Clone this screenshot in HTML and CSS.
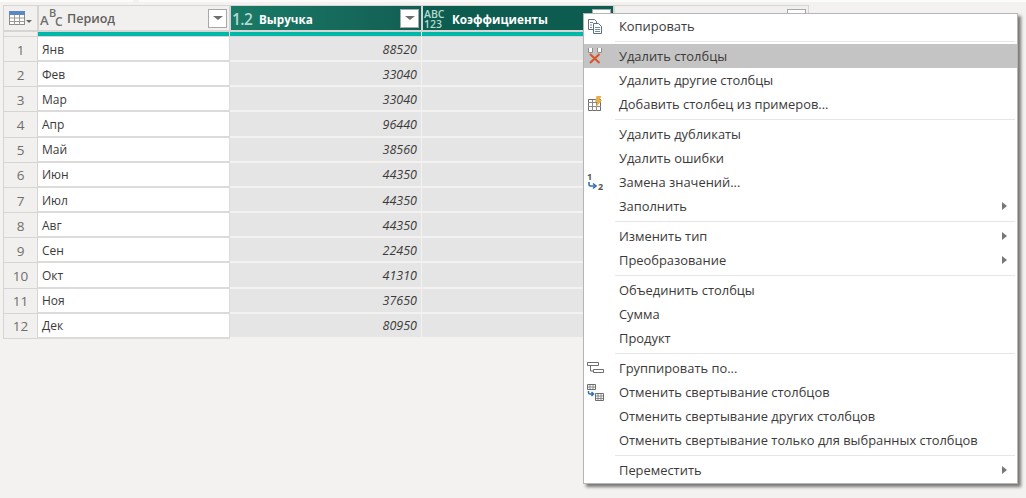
FILE: index.html
```html
<!DOCTYPE html>
<html lang="en">
<head>
  <meta charset="UTF-8">
  <title>Период — Power Query</title>
  <link rel="stylesheet" href="styles.css">
</head>
<body>

  <div class="top-strip">
    <span class="strip-a"></span>
    <span class="strip-b"></span>
  </div>

  <div class="grid">
    <!-- header row -->
    <div class="head corner">
      <svg width="23" height="15" viewBox="0 0 23 15">
        <rect x="0.5" y="0.5" width="15" height="13" fill="#fff" stroke="#8a8a8a"/>
        <rect x="0.5" y="0.5" width="15" height="3" fill="#5b87c5" stroke="#5b87c5"/>
        <path d="M5.500 4v10M10.500 4v10M1 7h14M1 10.500h14" stroke="#9a9a9a"/>
        <path d="M17 9h6l-3 3z" fill="#666"/>
      </svg>
    </div>
    <div class="head plain">
      <span class="type-abc"><i>A</i><i class="up">B</i><i class="down">C</i></span>
      <span class="title">Период</span>
      <span class="filter"></span>
    </div>
    <div class="head green">
      <span class="type-num">1.2</span>
      <span class="title">Выручка</span>
      <span class="filter"></span>
    </div>
    <div class="head dark">
      <span class="type-any">ABC<br>123</span>
      <span class="title title-wide">Коэффициенты</span>
      <span class="filter"></span>
    </div>
    <div class="head plain">
      <span class="filter"></span>
    </div>

    <!-- quality line -->
    <div class="line blank"></div>
    <div class="line"></div>
    <div class="line"></div>
    <div class="line"></div>
    <div class="line"></div>

    <!-- rows -->
    <div class="num">1</div><div class="cell">Янв</div><div class="cell val">88520</div><div class="cell sel"></div><div class="cell"></div>
    <div class="num">2</div><div class="cell">Фев</div><div class="cell val">33040</div><div class="cell sel"></div><div class="cell"></div>
    <div class="num">3</div><div class="cell">Мар</div><div class="cell val">33040</div><div class="cell sel"></div><div class="cell"></div>
    <div class="num">4</div><div class="cell">Апр</div><div class="cell val">96440</div><div class="cell sel"></div><div class="cell"></div>
    <div class="num">5</div><div class="cell">Май</div><div class="cell val">38560</div><div class="cell sel"></div><div class="cell"></div>
    <div class="num">6</div><div class="cell">Июн</div><div class="cell val">44350</div><div class="cell sel"></div><div class="cell"></div>
    <div class="num">7</div><div class="cell">Июл</div><div class="cell val">44350</div><div class="cell sel"></div><div class="cell"></div>
    <div class="num">8</div><div class="cell">Авг</div><div class="cell val">44350</div><div class="cell sel"></div><div class="cell"></div>
    <div class="num">9</div><div class="cell">Сен</div><div class="cell val">22450</div><div class="cell sel"></div><div class="cell"></div>
    <div class="num">10</div><div class="cell">Окт</div><div class="cell val">41310</div><div class="cell sel"></div><div class="cell"></div>
    <div class="num">11</div><div class="cell">Ноя</div><div class="cell val">37650</div><div class="cell sel"></div><div class="cell"></div>
    <div class="num">12</div><div class="cell">Дек</div><div class="cell val">80950</div><div class="cell sel"></div><div class="cell"></div>
  </div>

  <div class="menu">
    <div class="item">
      <svg class="icon" width="16" height="16" viewBox="0 0 16 16">
        <path d="M1.500 1.500h6l2 2v8h-8z" fill="#fff" stroke="#6d6d6d"/>
        <path d="M6.500 5.500h5l3 3v7h-8z" fill="#fff" stroke="#5a6f8c"/>
        <path d="M3 4.500h3M3 7h2M3 9.500h2M8 9.500h5M8 11.500h5M8 13.500h5" stroke="#6d8ab0"/>
      </svg>
      Копировать
    </div>
    <div class="sep"></div>
    <div class="item active">
      <svg class="icon" width="16" height="16" viewBox="0 0 16 16">
        <path d="M1.500 0v4.500h4V0M10.500 0v4.500h4V0" fill="#fff" stroke="#8f8f8f"/>
        <path d="M3 6l9.500 9M12.500 6L3 15" stroke="#d9532c" stroke-width="2"/>
      </svg>
      Удалить столбцы
    </div>
    <div class="item">Удалить другие столбцы</div>
    <div class="item">
      <svg class="icon" width="16" height="16" viewBox="0 0 16 16">
        <path d="M1.500 3.500h12v11h-12z" fill="#fff" stroke="#6d6d6d"/>
        <path d="M1 6.500h13M1 10.500h13M5.500 4v11M9.500 4v11" stroke="#8a8a8a"/>
        <path d="M9.500 0h5l-2 4h2.500l-6.500 8 2-6h-2.500z" fill="#e9b04a"/>
      </svg>
      Добавить столбец из примеров...
    </div>
    <div class="sep"></div>
    <div class="item">Удалить дубликаты</div>
    <div class="item">Удалить ошибки</div>
    <div class="item">
      <svg class="icon icon-wide" width="20" height="23" viewBox="0 0 20 23">
        <text x="1" y="9" class="icon-num">1</text>
        <path d="M3 11v2.500q0 1.500 1.500 1.500h5" fill="none" stroke="#2f6fb5" stroke-width="1.600"/>
        <path d="M7 12.500l3 2.500-3 2.500" fill="none" stroke="#2f6fb5" stroke-width="1.600"/>
        <text x="12" y="19" class="icon-num">2</text>
      </svg>
      Замена значений...
    </div>
    <div class="item">Заполнить<span class="arrow"></span></div>
    <div class="sep"></div>
    <div class="item">Изменить тип<span class="arrow"></span></div>
    <div class="item">Преобразование<span class="arrow"></span></div>
    <div class="sep"></div>
    <div class="item">Объединить столбцы</div>
    <div class="item">Сумма</div>
    <div class="item">Продукт</div>
    <div class="sep"></div>
    <div class="item">
      <svg class="icon" width="17" height="16" viewBox="0 0 17 16">
        <path d="M0.500 2.500h11v3h-11zM6.500 9.500h10v3h-10z" fill="#fff" stroke="#6d6d6d"/>
        <path d="M3.500 6v5h3" fill="none" stroke="#6d6d6d"/>
      </svg>
      Группировать по...
    </div>
    <div class="item">
      <svg class="icon" width="17" height="17" viewBox="0 0 17 17">
        <path d="M0.500 0.500h8v5h-8zM8.500 9.500h8v7h-8z" fill="#fff" stroke="#6d6d6d"/>
        <path d="M3 1v4M6 1v4M1 3h7M11 10v6M14 10v6M9 12h7M9 14.500h7" stroke="#8a8a8a"/>
        <path d="M1.500 7v1.500q0 1.500 1.500 1.500h3M4.500 8l2 2-2 2" fill="none" stroke="#2f6fb5" stroke-width="1.500"/>
      </svg>
      Отменить свертывание столбцов
    </div>
    <div class="item">Отменить свертывание других столбцов</div>
    <div class="item">Отменить свертывание только для выбранных столбцов</div>
    <div class="sep"></div>
    <div class="item">Переместить<span class="arrow"></span></div>
  </div>

</body>
</html>
```

FILE: styles.css
```css
* {
  box-sizing: border-box;
}

body {
  margin: 0;
  height: 498px;
  overflow: hidden;
  background: #f3f2f0;
  font-family: "Open Sans", sans-serif;
  font-size: 12px;
  color: #3b3a39;
}

.top-strip {
  display: flex;
  gap: 6px;
  height: 2px;
}

.strip-a {
  width: 133px;
  background: #fbfbfa;
}

.strip-b {
  flex: 1;
  background: #fbfbfa;
}

.grid {
  display: grid;
  grid-template-columns: 35px 192px 192px 192px 195px;
  grid-template-rows: 27px 5px repeat(12, 25.17px);
  margin: 3px 0 0 3px;
  width: 806px;
}

.head {
  display: flex;
  align-items: center;
  padding: 1px 2px 0 1px;
  border: 1px solid #d6d5d3;
  border-bottom-width: 2px;
  background: #f1f0ee;
  font-weight: 600;
  font-size: 12.500px;
  color: #605e5c;
}

.corner {
  padding-left: 5px;
}

.green {
  background: linear-gradient(90deg, #1a7a66, #125e53);
  color: #fff;
  font-weight: 700;
  font-size: 11.700px;
}

.dark {
  background: #0d5c50;
  color: #fff;
  font-weight: 700;
  font-size: 11.700px;
}

.title {
  flex: 1;
  padding-left: 3px;
}

.title-wide {
  padding-left: 5px;
}

.type-abc {
  position: relative;
  width: 24px;
  height: 22px;
  font-size: 13px;
  font-weight: 600;
  color: #6e6e6e;
}

.type-abc i {
  position: absolute;
  left: 0;
  top: 3px;
  font-style: normal;
}

.type-abc .up {
  left: 9px;
  top: -3px;
  font-size: 11px;
}

.type-abc .down {
  left: 15px;
  top: 5px;
  font-size: 12px;
}

.type-num {
  width: 24px;
  font-size: 15.500px;
  font-weight: 600;
  color: #b5d9d0;
  letter-spacing: -0.5px;
}

.type-any {
  width: 23px;
  font-size: 10.500px;
  line-height: 10px;
  font-weight: 600;
  color: #b5d9d0;
}

.filter {
  position: relative;
  width: 19px;
  height: 19px;
  margin-left: auto;
  background: #fff;
  border: 1px solid #a8a8a8;
}

.filter::after {
  content: "";
  position: absolute;
  left: 4px;
  top: 6px;
  border: 5px solid transparent;
  border-top: 4px solid #6e6e6e;
  border-bottom: 0;
}

.line {
  background: #00b8a9;
  border-right: 1px solid #e6e6e4;
  border-bottom: 1px solid #d6d5d3;
}

.line.blank {
  background: #f1f0ee;
  border: 1px solid #d6d5d3;
  border-top: 0;
}

.num {
  display: flex;
  align-items: center;
  justify-content: center;
  padding-top: 1px;
  background: #f1f0ee;
  border: 1px solid #d6d5d3;
  border-top: 0;
  font-size: 13.500px;
  color: #706e6c;
}

.cell {
  display: flex;
  align-items: center;
  padding: 1px 4px 0;
  background: #fff;
  border-right: 1px solid #dcdbd9;
  border-bottom: 2px solid #dcdbd9;
}

.val {
  justify-content: flex-end;
  background: #e5e5e5;
  border-color: #f3f2f0;
  font-style: italic;
  font-size: 12.500px;
}

.sel {
  background: #e5e5e5;
  border-color: #f3f2f0;
}

/* context menu lies over the grid */
.menu {
  position: absolute;
  left: 583px;
  top: 13px;
  width: 435px;
  height: 471px;
  background: #fff;
  border: 1px solid #b5b5b5;
  box-shadow: 3px 3px 3px rgba(0, 0, 0, 0.5);
  font-size: 12.900px;
}

.item {
  display: flex;
  align-items: center;
  position: relative;
  height: 24px;
  padding-left: 35px;
  color: #3b3a39;
}

.item.active {
  background: #c4c4c4;
}

.sep {
  height: 1px;
  margin: 3px 2px 2px 31px;
  background: #e6e6e6;
}

.icon {
  position: absolute;
  left: 3px;
  top: 4px;
}

.icon-wide {
  left: 2px;
  top: 1px;
}

.icon-num {
  font-family: "Open Sans", sans-serif;
  font-size: 9px;
  font-weight: 700;
  fill: #555;
}

.arrow {
  position: absolute;
  right: 10px;
  top: 8px;
  border: 4px solid transparent;
  border-left: 5px solid #777;
  border-right: 0;
}
```
